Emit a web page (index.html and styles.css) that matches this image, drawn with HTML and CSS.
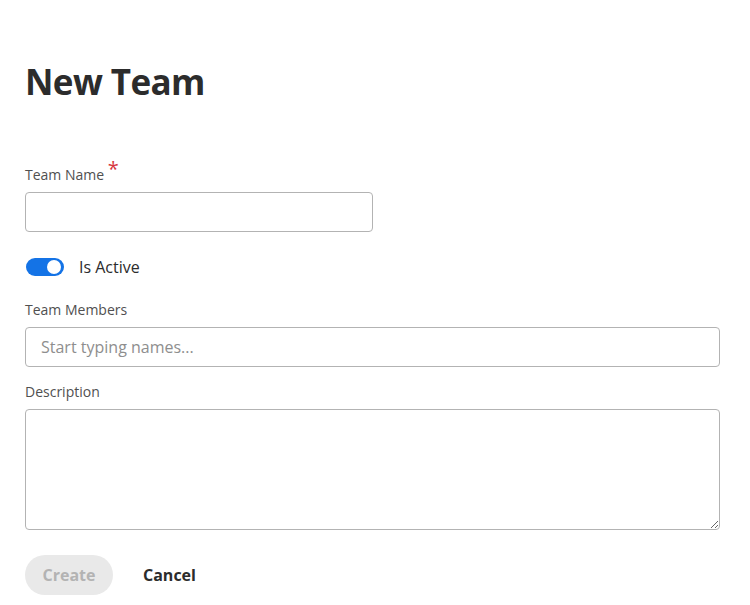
FILE: index.html
```html
<!DOCTYPE html>
<html lang="en">

<head>
    <meta charset="UTF-8">
    <meta name="viewport" content="width=device-width, initial-scale=1.0">
    <title>New Team</title>
    <link rel="stylesheet" href="styles.css">
</head>

<body>
    <h1>New Team</h1>
    <form class="team-form" action="">
        <label class="field-label" for="teamName">Team Name <span class="required">*</span></label>
        <input class="text-input short" type="text" id="teamName" name="teamName">

        <label class="switch">
            <input type="checkbox" checked>
            <span class="track"><span class="knob"></span></span>
            <span class="switch-text">Is Active</span>
        </label>

        <label class="field-label" for="members">Team Members</label>
        <input class="text-input" type="text" id="members" placeholder="Start typing names...">

        <label class="field-label" for="description">Description</label>
        <textarea class="text-area" id="description"></textarea>

        <div class="actions">
            <button class="btn-create" type="button" disabled>Create</button>
            <button class="btn-cancel" type="button">Cancel</button>
        </div>
    </form>
</body>

</html>
```

FILE: styles.css
```css
body {
    margin: 0;
    padding: 0 30px 0 25px;
    font-family: "Open Sans", sans-serif;
    color: #2c2c2c;
    background: #fff;
}

h1 {
    margin: 58px 0 0;
    font-size: 35px;
    font-weight: 700;
    line-height: 48px;
    color: #2c2c2c;
    letter-spacing: -0.6px;
}

.team-form {
    display: flex;
    flex-direction: column;
}

.field-label {
    font-size: 14px;
    color: #505050;
    line-height: 18px;
    margin-bottom: 8px;
}

.team-form > .field-label:first-child {
    margin-top: 60px;
}

.required {
    color: #d7373f;
    font-size: 20px;
    position: relative;
    top: -4px;
    line-height: 0;
}

.text-input {
    box-sizing: border-box;
    height: 40px;
    border: 1px solid #b3b3b3;
    border-radius: 4px;
    padding: 0 15px;
    font-family: inherit;
    font-size: 16px;
    color: #2c2c2c;
    margin-bottom: 16px;
}

.text-input::placeholder {
    color: #8e8e8e;
}

.text-input.short {
    width: 348px;
    margin-bottom: 25px;
}

.switch {
    display: flex;
    align-items: center;
    gap: 15px;
    margin-bottom: 24px;
    height: 20px;
}

.switch input {
    display: none;
}

.track {
    width: 38px;
    height: 18px;
    margin-left: 1px;
    border-radius: 9px;
    background: #1473e6;
    display: flex;
    align-items: center;
    justify-content: flex-end;
    padding: 0 3px;
    box-sizing: border-box;
}

.knob {
    width: 14px;
    height: 14px;
    border-radius: 50%;
    background: #fff;
}

.switch-text {
    font-size: 16px;
    color: #2c2c2c;
}

.text-area {
    box-sizing: border-box;
    height: 121px;
    border: 1px solid #b3b3b3;
    border-radius: 4px;
    padding: 8px 15px;
    font-family: inherit;
    font-size: 16px;
    resize: vertical;
}

.actions {
    display: flex;
    align-items: center;
    gap: 30px;
    margin-top: 25px;
}

.btn-create {
    height: 40px;
    width: 88px;
    border: none;
    border-radius: 20px;
    background: #e9e9e9;
    color: #b3b3b3;
    font-family: inherit;
    font-size: 16px;
    font-weight: 700;
}

.btn-cancel {
    border: none;
    background: none;
    padding: 0;
    font-family: inherit;
    font-size: 16px;
    font-weight: 700;
    color: #2c2c2c;
}
```
